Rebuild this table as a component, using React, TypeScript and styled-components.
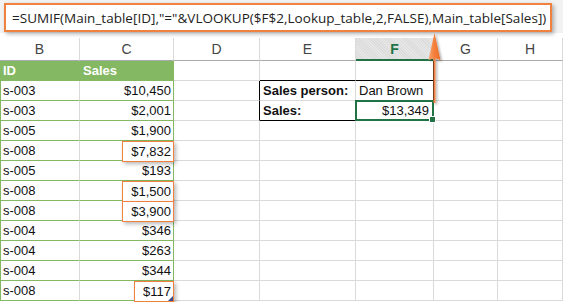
import React from 'react';
import styled, { createGlobalStyle } from 'styled-components';

const GREEN = '#84b863';
const GRID = '#dadada';
const ORANGE = '#f0813f';

const GlobalStyle = createGlobalStyle`
  html, body {
    margin: 0;
    padding: 0;
    background: #ffffff;
  }
`;

type Row = {
  id: string;
  sales: string;
  mark?: boolean;
  corner?: boolean;
  label?: string;
  value?: string;
  selected?: boolean;
};

const rows: Row[] = [
  { id: 's-003', sales: '$10,450', label: 'Sales person:', value: 'Dan Brown' },
  { id: 's-003', sales: '$2,001', label: 'Sales:', value: '$13,349', selected: true },
  { id: 's-005', sales: '$1,900' },
  { id: 's-008', sales: '$7,832', mark: true },
  { id: 's-005', sales: '$193' },
  { id: 's-008', sales: '$1,500', mark: true },
  { id: 's-008', sales: '$3,900', mark: true },
  { id: 's-004', sales: '$346' },
  { id: 's-004', sales: '$263' },
  { id: 's-004', sales: '$344' },
  { id: 's-008', sales: '$117', mark: true, corner: true },
];

const columns = ['B', 'C', 'D', 'E', 'F', 'G', 'H'];

const App = () => {
  return (
    <Page>
      <GlobalStyle />
      <FormulaArea>
        <FormulaBox>
          =SUMIF(Main_table[ID],"="&amp;VLOOKUP($F$2,Lookup_table,2,FALSE),Main_table[Sales])
        </FormulaBox>
      </FormulaArea>
      <Sheet>
        {columns.map((c) => (
          <ColHeader key={c} $active={c === 'F'}>
            {c}
          </ColHeader>
        ))}

        <Cell $fill={GREEN} $right={GREEN} $bottom={GREEN} $edge $bold $color="#fff">
          ID
        </Cell>
        <Cell $fill={GREEN} $right={GREEN} $bottom={GREEN} $bold $color="#fff">
          Sales
        </Cell>
        <Cell />
        <Cell $bottom="#000" />
        <Cell $bottom="#000" $right="#000" />
        <Cell />
        <Cell />

        {rows.map((r, i) => {
          const inBox = i < 2;
          return (
            <React.Fragment key={i}>
              <Cell $right={GRID} $bottom={GREEN} $edge>
                {r.id}
              </Cell>
              <Cell $right={GREEN} $bottom={GREEN} $align="right">
                {r.mark ? <Marked $corner={r.corner}>{r.sales}</Marked> : r.sales}
              </Cell>
              <Cell $right={inBox ? '#000' : GRID} />
              <Cell $bold $bottom={i === 1 ? '#000' : GRID}>
                {r.label}
              </Cell>
              {r.selected ? (
                <Selected>{r.value}</Selected>
              ) : (
                <Cell $right={inBox ? '#000' : GRID}>{r.value}</Cell>
              )}
              <Cell />
              <Cell />
            </React.Fragment>
          );
        })}
      </Sheet>

      <Arrow width="18" height="76" viewBox="0 0 18 76">
        <defs>
          <filter id="sh" x="-50%" y="-20%" width="200%" height="140%">
            <feDropShadow dx="1.5" dy="1.5" stdDeviation="1.2" floodColor="#000" floodOpacity="0.35" />
          </filter>
          <linearGradient id="head" x1="0" y1="0" x2="1" y2="0">
            <stop offset="0" stopColor="#f7a571" />
            <stop offset="0.5" stopColor="#f47e3a" />
            <stop offset="1" stopColor="#e9702c" />
          </linearGradient>
        </defs>
        <g filter="url(#sh)">
          <line x1="8.5" y1="26" x2="8.5" y2="72" stroke={ORANGE} strokeWidth="2" />
          <path d="M8.5 2 L14.5 29 L8.5 27 L2.5 29 Z" fill="url(#head)" />
        </g>
      </Arrow>
    </Page>
  );
};

export default App;

const Page = styled.div`
  position: relative;
  width: 563px;
  height: 302px;
  overflow: hidden;
  background: #ffffff;
`;

const FormulaArea = styled.div`
  height: 38px;
  box-sizing: border-box;
  padding: 3px 11px 0 4px;
  background: linear-gradient(#f2f2f2 0, #f2f2f2 33px, #ffffff 33px);
`;

const FormulaBox = styled.div`
  height: 29px;
  box-sizing: border-box;
  border: 2px solid ${ORANGE};
  background: #ffffff;
  box-shadow: 2px 2px 4px rgba(0, 0, 0, 0.3);
  padding: 0 0 0 6px;
  display: flex;
  align-items: center;
  font-family: 'Open Sans', 'Liberation Sans', sans-serif;
  font-size: 13.5px;
  color: #222;
  white-space: nowrap;
  letter-spacing: 0.02px;
`;

const Sheet = styled.div`
  display: grid;
  grid-template-columns: 80px 94px 86px 96px 78px 64px 65px;
  grid-template-rows: 23px;
  grid-auto-rows: 20px;
  font-family: 'Liberation Sans', Arial, sans-serif;
  font-size: 13px;
`;

const ColHeader = styled.div<{ $active?: boolean }>`
  box-sizing: border-box;
  display: flex;
  align-items: center;
  justify-content: center;
  border-right: 1px solid ${GRID};
  border-bottom: ${(p) => (p.$active ? '2px solid #217346' : '1px solid #ababab')};
  background: ${(p) =>
    p.$active
      ? 'repeating-linear-gradient(45deg, #dcdcdc 0 1px, #e6e6e6 1px 2px)'
      : '#ffffff'};
  color: ${(p) => (p.$active ? '#217346' : '#444')};
  font-weight: ${(p) => (p.$active ? 700 : 400)};
  font-size: 14px;
  padding-top: ${(p) => (p.$active ? '1px' : '0')};
`;

const Cell = styled.div<{
  $right?: string;
  $bottom?: string;
  $fill?: string;
  $bold?: boolean;
  $color?: string;
  $align?: 'left' | 'right';
  $edge?: boolean;
}>`
  box-sizing: border-box;
  display: flex;
  align-items: center;
  justify-content: ${(p) => (p.$align === 'right' ? 'flex-end' : 'flex-start')};
  padding: ${(p) => (p.$align === 'right' ? '0 2px 0 0' : '0 0 0 3px')};
  border-right: 1px solid ${(p) => p.$right || GRID};
  border-bottom: 1px solid ${(p) => p.$bottom || GRID};
  background: ${(p) => p.$fill || 'transparent'};
  box-shadow: ${(p) => (p.$edge ? `inset 1px 0 0 ${GREEN}` : 'none')};
  color: ${(p) => p.$color || '#111'};
  font-weight: ${(p) => (p.$bold ? 700 : 400)};
  white-space: nowrap;
`;

const Marked = styled.span<{ $corner?: boolean }>`
  position: relative;
  box-sizing: border-box;
  display: flex;
  align-items: center;
  height: 21px;
  margin: 0 -3px -1px 0;
  padding: 0 2px 0 8px;
  border: 1.5px solid ${ORANGE};
  box-shadow: 2px 2px 4px rgba(0, 0, 0, 0.28);
  background: #ffffff;

  &::after {
    content: '';
    display: ${(p) => (p.$corner ? 'block' : 'none')};
    position: absolute;
    right: 0;
    bottom: 0;
    width: 0;
    height: 0;
    border-left: 5px solid transparent;
    border-bottom: 5px solid #3b4a8c;
  }
`;

const Selected = styled.div`
  position: relative;
  box-sizing: border-box;
  display: flex;
  align-items: center;
  justify-content: flex-end;
  padding: 0 3px 0 0;
  margin: -1px 0 0 -1px;
  border: 2px solid #217346;
  color: #111;

  &::after {
    content: '';
    position: absolute;
    right: -4px;
    bottom: -4px;
    width: 5px;
    height: 5px;
    background: #217346;
    border: 1px solid #ffffff;
  }
`;

const Arrow = styled.svg`
  position: absolute;
  left: 426px;
  top: 31px;
  overflow: visible;
`;
